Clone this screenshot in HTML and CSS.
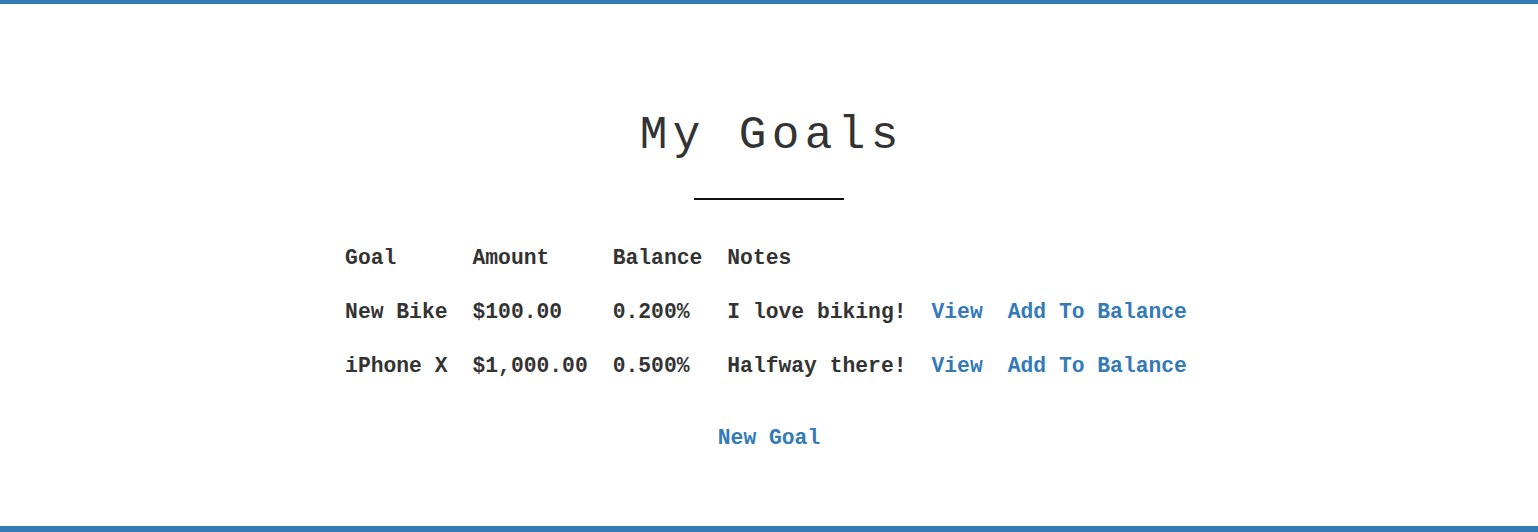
FILE: index.html
```html
<!DOCTYPE html>
<html lang="en">
<head>
<meta charset="utf-8">
<title>My Goals</title>
<link rel="stylesheet" href="styles.css">
</head>
<body>
<main class="page">
  <h1 class="title">My Goals</h1>
  <div class="divider"></div>
  <table class="goals">
    <thead>
      <tr><th>Goal</th><th>Amount</th><th>Balance</th><th>Notes</th><th></th><th></th></tr>
    </thead>
    <tbody>
      <tr><td>New Bike</td><td>$100.00</td><td>0.200%</td><td>I love biking!</td><td><a href="#">View</a></td><td><a href="#">Add To Balance</a></td></tr>
      <tr><td>iPhone X</td><td>$1,000.00</td><td>0.500%</td><td>Halfway there!</td><td><a href="#">View</a></td><td><a href="#">Add To Balance</a></td></tr>
    </tbody>
  </table>
  <div class="actions"><a href="#">New Goal</a></div>
</main>
</body>
</html>
```

FILE: styles.css
```css
html, body {
  margin: 0;
  padding: 0;
}
body {
  box-sizing: border-box;
  height: 100vh;
  border-top: 4px solid #337ab7;
  border-bottom: 6px solid #337ab7;
  background: #fff;
  color: #333;
  font-family: "Liberation Mono", "Courier New", monospace;
}
.page {
  display: flex;
  flex-direction: column;
  align-items: center;
  padding-top: 108px;
}
.title {
  margin: 0;
  font-size: 46px;
  line-height: 48.4px;
  font-weight: normal;
  letter-spacing: 5.4px;
  padding-left: 5.4px;
  color: #333;
}
.divider {
  width: 150px;
  height: 2px;
  background: #111;
  margin-top: 38px;
}
.goals {
  margin-top: 31px;
  margin-right: 6px;
  border-collapse: collapse;
  font-size: 21.33px;
  line-height: 24px;
  font-weight: bold;
}
.goals th, .goals td {
  text-align: left;
  padding: 15px 25px 15px 0;
  white-space: nowrap;
}
.goals th:last-child, .goals td:last-child {
  padding-right: 0;
}
a {
  color: #337ab7;
  text-decoration: none;
}
.actions {
  margin-top: 33px;
  font-size: 21.33px;
  line-height: 24px;
  font-weight: bold;
}
```
